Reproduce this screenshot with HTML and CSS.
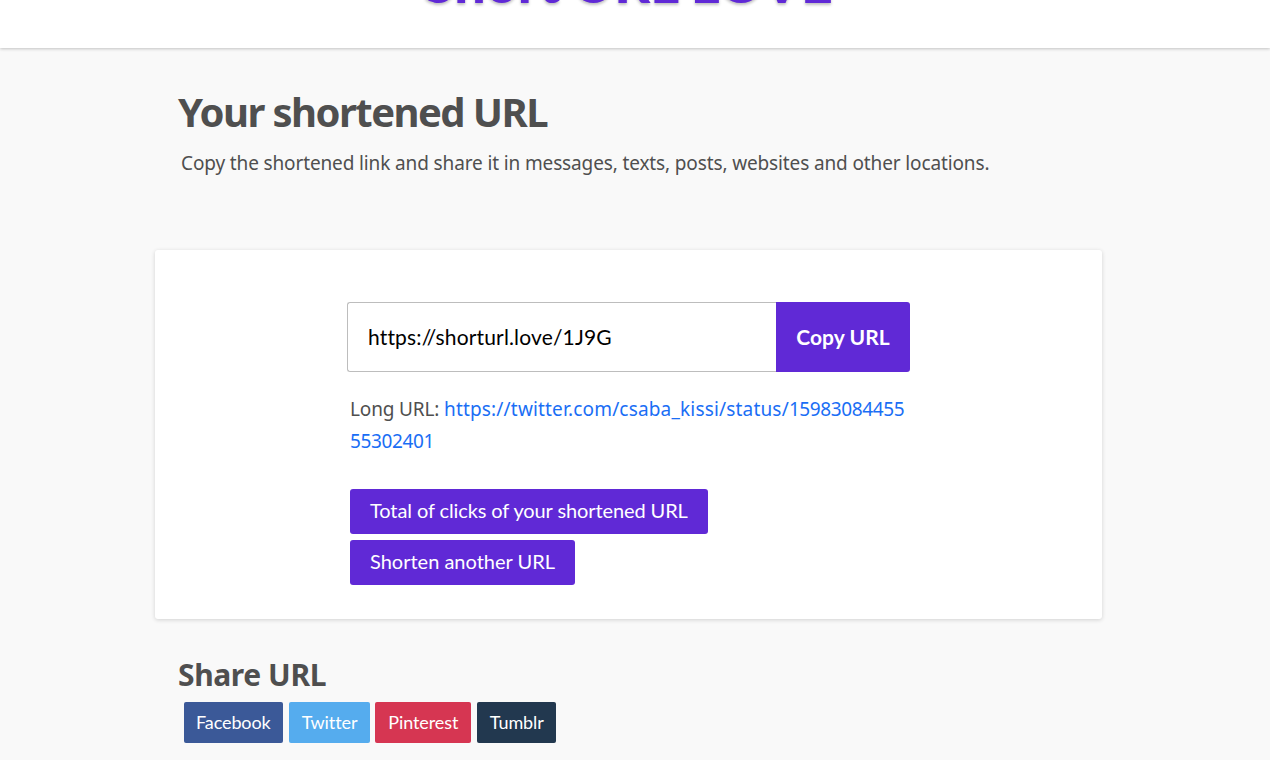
FILE: index.html
```html
<!DOCTYPE html>
<html lang="en">
<head>
<meta charset="utf-8">
<title>Your shortened URL</title>
<link rel="stylesheet" href="styles.css">
</head>
<body>
<header class="site-header">
  <div class="logo">Short URL LOVE</div>
</header>
<main class="wrap">
  <section class="intro">
    <h1>Your shortened URL</h1>
    <p>Copy the shortened link and share it in messages, texts, posts, websites and other locations.</p>
  </section>
  <section class="card">
    <div class="inner">
      <div class="copy-row">
        <div class="url-input">https://shorturl.love/1J9G</div>
        <button class="copy-btn">Copy URL</button>
      </div>
      <p class="long-url">Long URL: <a href="#">https://twitter.com/csaba_kissi/status/<span class="digits">1598308445555302401</span></a></p>
      <div class="actions">
        <a class="btn" href="#">Total of clicks of your shortened URL</a>
        <a class="btn btn-wide" href="#">Shorten another URL</a>
      </div>
    </div>
  </section>
  <section class="share">
    <h2>Share URL</h2>
    <div class="share-row">
      <a class="social fb" href="#">Facebook</a>
      <a class="social tw" href="#">Twitter</a>
      <a class="social pi" href="#">Pinterest</a>
      <a class="social tu" href="#">Tumblr</a>
    </div>
  </section>
</main>
</body>
</html>
```
FILE: styles.css
```css
* { box-sizing: border-box; }
html, body { margin: 0; height: 760px; overflow: hidden; }
body { background: #f9f9f9; color: #4f4f4f; font-family: "Noto Sans", "Open Sans", sans-serif; }
a { text-decoration: none; }

.site-header {
  height: 48px;
  background: #fff;
  box-shadow: 0 1px 3px rgba(0,0,0,.22);
  overflow: hidden;
  display: flex;
  justify-content: center;
}
.logo {
  margin: -42px 13px 0 0;
  height: 48px;
  font-family: "Lato", sans-serif;
  font-weight: 900;
  font-size: 55.5px;
  line-height: 48px;
  color: #6029d6;
  text-shadow: 0 2px 3px rgba(0,0,0,.25);
  white-space: nowrap;
}

.wrap { width: 947px; margin-left: 155px; }

.intro { padding: 39px 0 0 23px; height: 202px; }
.intro h1 {
  margin: 0;
  font-size: 40px;
  line-height: 50px;
  font-weight: 700;
  letter-spacing: -1.55px;
  color: #4f4f4f;
}
.intro p {
  margin: 13px 0 0 3px;
  font-size: 19px;
  line-height: 26px;
  letter-spacing: -.13px;
}

.card {
  height: 369px;
  background: #fff;
  border-radius: 3px;
  box-shadow: 0 1px 4px rgba(0,0,0,.16);
  padding: 52px 0 0 192px;
}
.inner { width: 563px; }
.copy-row { display: flex; height: 70px; }
.url-input {
  width: 429px;
  border: 1px solid #bdbdbd;
  border-right: 0;
  border-radius: 3px 0 0 3px;
  padding-left: 20px;
  font-family: "Lato", sans-serif;
  font-size: 21px;
  line-height: 68px;
  letter-spacing: .16px;
  color: #000;
}
.copy-btn {
  width: 134px;
  border: 0;
  border-radius: 0 3px 3px 0;
  background: #6029d6;
  color: #fff;
  font-family: "Lato", sans-serif;
  font-weight: 700;
  font-size: 21px;
  letter-spacing: .05px;
  padding: 0 0 2px;
}
.long-url {
  margin: 21px 0 0 3px;
  width: 556px;
  font-size: 19px;
  line-height: 32px;
  letter-spacing: -.15px;
  word-break: break-all;
}
.long-url a { color: #1a6ef5; letter-spacing: .17px; }
.long-url .digits { letter-spacing: -.37px; }

.actions { margin: 32px 0 0 3px; display: flex; flex-direction: column; align-items: flex-start; gap: 6px; }
.btn {
  height: 45px;
  padding: 0 20px;
  background: #6029d6;
  border-radius: 3px;
  color: #fff;
  font-family: "Lato", sans-serif;
  font-size: 20px;
  line-height: 42px;
  letter-spacing: -.1px;
}
.btn-wide { letter-spacing: 0; }

.share { padding: 36px 0 0 23px; }
.share h2 {
  margin: 0;
  font-size: 30px;
  line-height: 40px;
  font-weight: 700;
  letter-spacing: -.4px;
  color: #4f4f4f;
}
.share-row { display: flex; gap: 6px; margin: 7px 0 0 6px; }
.social {
  height: 41px;
  padding: 0 12px;
  border-radius: 2px;
  color: #fff;
  font-family: "Lato", sans-serif;
  font-size: 18px;
  line-height: 41px;
  letter-spacing: -.1px;
}
.fb { background: #3b5998; }
.tw { background: #55acee; padding: 0 13px; }
.pi { background: #d63652; padding: 0 13px; margin-left: -1px; }
.tu { background: #22384f; padding: 0 12.5px; }
```
